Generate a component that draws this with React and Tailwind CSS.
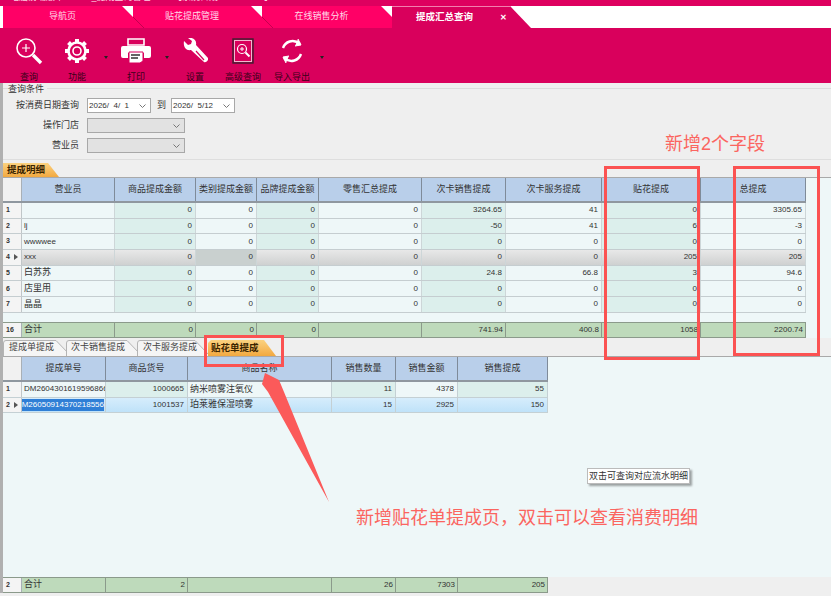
import React from "react";

const g1 = "grid w-fit grid-cols-[19px_93px_81px_61px_62px_103px_84px_96px_99px_105px]";
const g2 = "grid w-fit grid-cols-[19px_84px_82px_144px_64px_62px_90px]";

const detail = [
  ["1", "", "0", "0", "0", "0", "3264.65", "41", "0", "3305.65"],
  ["2", "lj", "0", "0", "0", "0", "-50", "41", "6", "-3"],
  ["3", "wwwwee", "0", "0", "0", "0", "0", "0", "0", "0"],
  ["4", "xxx", "0", "0", "0", "0", "0", "0", "205", "205"],
  ["5", "白苏苏", "0", "0", "0", "0", "24.8", "66.8", "3", "94.6"],
  ["6", "店里用", "0", "0", "0", "0", "0", "0", "0", "0"],
  ["7", "晶晶", "0", "0", "0", "0", "0", "0", "0", "0"],
];
const hd1 = ["营业员", "商品提成金额", "类别提成金额", "品牌提成金额", "零售汇总提成", "次卡销售提成", "次卡服务提成", "贴花提成", "总提成"];
const ft1 = ["合计", "0", "0", "0", "", "741.94", "400.8", "1058", "2200.74"];

const hd2 = ["提成单号", "商品货号", "商品名称", "销售数量", "销售金额", "销售提成"];
const rows2 = [
  ["1", "DM2604301619596866", "1000665", "纳米喷雾注氧仪", "11", "4378", "55"],
  ["2", "DM26050914370218556", "1001537", "珀莱雅保湿喷雾", "15", "2925", "150"],
];
const ft2 = ["合计", "2", "", "26", "7303", "205"];

function Head({ cols, labels }) {
  return (
    <div className={`${cols} h-[25px] bg-[#b9cfea] border-b-2 border-[#8f979f]`}>
      <div className="bg-[#f1f1f1] border-r border-[#a9b0b6]" />
      {labels.map((l, i) => (
        <div key={i} className="flex items-center justify-center border-r border-[#7f8b99] text-[9px] text-[#333]">{l}</div>
      ))}
    </div>
  );
}

function Row({ r, cols, current }) {
  return (
    <div className={`${cols} h-[15.7px] border-b border-[#c5cdd0] text-[8px] text-[#333]`}>
      <div className="flex items-center justify-between bg-[#f4f4f4] border-r border-[#c0c6c8] pl-[3px] pr-[3px] font-bold text-[7px]">
        <span>{r[0]}</span>
        {current && <span className="w-0 h-0 border-y-[3.5px] border-y-transparent border-l-[4px] border-l-[#555]" />}
      </div>
      {r.slice(1).map((c, i) => {
        const sized = i === 0 ? (/[a-z]/.test(c) ? "pl-[2px] text-[8px]" : "pl-[2px] text-[9px]") : "justify-end pr-[3px]";
        const bg = current
          ? i === 2 ? "bg-[#c9d0cf]" : "bg-gradient-to-b from-[#e8e8e8] to-[#cfd1d1]"
          : [1, 3, 5, 7].includes(i) ? "bg-[#dcefec]" : "bg-[#eef7f8]";
        return <div key={i} className={`flex items-center overflow-hidden whitespace-nowrap border-r border-[#cdd6d8] ${sized} ${bg}`}>{c}</div>;
      })}
    </div>
  );
}

function Row2({ r, selected }) {
  return (
    <div className={`${g2} h-[15.500px] border-b border-[#c4d0d4] text-[8px] text-[#333]`}>
      <div className="flex items-center justify-between bg-[#f4f4f4] border-r border-[#c0c6c8] pl-[3px] pr-[3px] font-bold text-[7px]">
        <span>{r[0]}</span>
        {selected && <span className="w-0 h-0 border-y-[3.5px] border-y-transparent border-l-[4px] border-l-[#555]" />}
      </div>
      {r.slice(1).map((c, j) => {
        const sized = j === 2 ? "text-[9px] pl-[2px]" : j === 0 ? (selected ? "justify-end pr-[1px]" : "pl-[2px]") : "justify-end pr-[3px]";
        const bg = selected ? "bg-gradient-to-b from-[#d6edfc] to-[#bfe2f9]" : j % 2 === 1 ? "bg-[#dcefec]" : "bg-[#eef7f8]";
        return (
          <div key={j} className={`flex items-center overflow-hidden whitespace-nowrap border-r border-[#c4d0d4] ${sized} ${bg}`}>
            {selected && j === 0 ? <span className="shrink-0 bg-[#2f7fd6] text-white">{c}</span> : c}
          </div>
        );
      })}
    </div>
  );
}

function Foot({ cols, r, n }) {
  return (
    <div className={`${cols} h-[16px] bg-[#bedabb] border-y border-[#8b9a8b] text-[8px] text-[#333]`}>
      <div className="flex items-center bg-[#f4f4f4] pl-[3px] font-bold text-[7px] border-r border-[#a9b0b6]">{n}</div>
      {r.map((c, i) => (
        <div key={i} className={`flex items-center border-r border-[#8b9a8b] ${i === 0 ? "pl-[2px] text-[9px]" : "justify-end pr-[2px]"}`}>{c}</div>
      ))}
    </div>
  );
}

function PageTab({ label, w, line }) {
  return (
    <div className={`relative ${w} h-[22px] bg-[#ff0066] flex items-center justify-center text-[9px] text-[#ffd9e8] [clip-path:polygon(0_0,calc(100%-11px)_0,100%_11px,100%_100%,0_100%)]`}>
      {line && (
        <svg className="absolute left-0 top-0" width="12" height="22" viewBox="0 0 12 22">
          <path d="M0 11 L11 22" stroke="#c4004f" strokeWidth="1" />
        </svg>
      )}
      <span className="pr-[11px]">{label}</span>
    </div>
  );
}

function Tool({ w, label, arrow, children }) {
  return (
    <div className={`relative flex flex-col items-center ${w}`}>
      <div className="h-[32px] mt-[7px] flex items-center justify-center">{children}</div>
      <div className="mt-[4px] text-[9px] text-[#3a0018] leading-[12px] whitespace-nowrap">{label}</div>
      {arrow && <span className={`absolute ${arrow} top-[28px] w-0 h-0 border-x-[2.5px] border-x-transparent border-t-[3px] border-t-[#222]`} />}
    </div>
  );
}

function Select({ w, value, off }) {
  return (
    <div className={`${w} h-[15px] flex items-center justify-between border border-[#a8a8a8] text-[8px] text-[#333] pl-[1px] pr-[4px] ${off ? "bg-[#e2e2e2]" : "bg-white"}`}>
      <span className="whitespace-pre">{value}</span>
      <svg width="7" height="4" viewBox="0 0 7 4"><path d="M0.500 0.500 L3.500 3.500 L6.500 0.500" fill="none" stroke="#777" strokeWidth="1" /></svg>
    </div>
  );
}

function SubTab({ label, w, width, pl }) {
  return (
    <div className={`relative ${w} h-[16px] flex items-center ${pl} text-[9px] text-[#444]`}>
      <svg className="absolute left-0 top-0" width={width + 6} height="16" viewBox={`0 0 ${width + 6} 16`}>
        <path d={`M0.500 16 V3 Q0.500 0.500 3 0.500 H${width - 10} L${width + 5} 16`} fill="#f5f5f5" stroke="#b4b4b4" />
      </svg>
      <span className="relative">{label}</span>
    </div>
  );
}

export default function App() {
  return (
    <div className="relative w-[831px] h-[596px] overflow-hidden bg-[#efefef] font-['Liberation_Sans','Noto_Sans_CJK_SC',sans-serif]">
      <div className="h-[6px] bg-[#de005f] overflow-hidden">
        <div className="pl-[10px] -mt-[9px] text-[9px] leading-[12px] text-[#ffd0e2] whitespace-pre">电脑前端版本6.0.0.0_提成查询管理12     【系统日期: 2026-5-14】</div>
      </div>
      <div className="flex h-[22px] pl-[3px] bg-white">
        <PageTab label="导航页" w="w-[130px]" />
        <PageTab label="贴花提成管理" w="w-[129px]" line />
        <PageTab label="在线销售分析" w="w-[130px]" line />
        <div className="w-[139px] h-[22px] bg-[#d9005c] border-t border-[#f27fae] flex items-center text-[9.500px] font-bold text-white pl-[24px] [clip-path:polygon(0_0,calc(100%-21px)_0,100%_100%,0_100%)]">
          <span>提成汇总查询</span>
          <span className="ml-[27px] text-[8px]">✕</span>
        </div>
      </div>
      <div className="flex h-[55px] bg-[#d9005c] pl-[3px]">
        <Tool w="w-[52px]" label="查询">
          <svg width="28" height="28" viewBox="0 0 28 28" fill="none" stroke="#fff"><circle cx="11" cy="11" r="9" strokeWidth="1.600" /><path d="M7 11h8M11 7v8" strokeWidth="1.200" /><path d="M18 18l8 8" strokeWidth="3.400" /></svg>
        </Tool>
        <Tool w="w-[44px]" label="功能" arrow="-right-[9px]">
          <svg width="26" height="26" viewBox="0 0 26 26" fill="none" stroke="#fff"><circle cx="13" cy="13" r="8.500" strokeWidth="2.600" /><circle cx="13" cy="13" r="4" strokeWidth="1.600" /><path d="M13 1v4M13 21v4M1 13h4M21 13h4M4.500 4.500l3 3M18.500 18.500l3 3M21.500 4.500l-3 3M7.500 18.500l-3 3" strokeWidth="4" /></svg>
        </Tool>
        <Tool w="w-[74px]" label="打印" arrow="right-[4px]">
          <svg width="30" height="26" viewBox="0 0 30 26"><path d="M7 1h16v6H7z" fill="none" stroke="#fff" strokeWidth="1.600" /><path d="M2 8h26a2 2 0 0 1 2 2v8a2 2 0 0 1-2 2h-5v-5H7v5H2a2 2 0 0 1-2-2v-8a2 2 0 0 1 2-2z" fill="#fff" /><path d="M8 14h14v9l-3 2H8z" fill="#fff" stroke="#d9005c" strokeWidth="1" /><path d="M10 17h9M10 20h7" stroke="#333" strokeWidth="1.400" /></svg>
        </Tool>
        <Tool w="w-[44px]" label="设置">
          <svg width="26" height="26" viewBox="0 0 26 26"><path d="M2 3l4 4 3-1 1-3-4-3c5-1 9 2 8 7l12 13c1 2-2 5-4 4L9 12c-5 1-8-3-7-9z" fill="#fff" /><path d="M14 13l8 9" stroke="#d9005c" strokeWidth="1.200" /></svg>
        </Tool>
        <Tool w="w-[52px]" label="高级查询">
          <svg width="22" height="26" viewBox="0 0 22 26" fill="none"><rect x="1" y="1" width="20" height="24" stroke="#3a2030" strokeWidth="1.400" /><rect x="2.500" y="2.500" width="17" height="21" stroke="#f4b5cf" strokeWidth="1" /><circle cx="10" cy="11" r="4.500" stroke="#fff" strokeWidth="1.200" /><path d="M8 11h4M10 9v4" stroke="#fff" strokeWidth="1" /><path d="M13.500 14.500l4 4" stroke="#fff" strokeWidth="2" /></svg>
        </Tool>
        <Tool w="w-[46px]" label="导入导出" arrow="-right-[9px]">
          <svg width="26" height="26" viewBox="0 0 26 26" fill="none" stroke="#fff" strokeWidth="2.400"><path d="M4 10C6 4 14 0 21 6" /><path d="M22 16C20 22 12 26 5 20" /><path d="M19 1l3 6-6 1" fill="#fff" strokeWidth="1" /><path d="M7 25l-3-6 6-1" fill="#fff" strokeWidth="1" /></svg>
        </Tool>
      </div>
      <div className="flex">
        <div className="w-[3px] bg-[#b0b0b0]" />
        <div className="flex-1 min-w-0">
          <div className="h-[6px] border-b border-[#dcdcdc]" />
          <div className="h-[71px] relative border-b border-[#dedede]">
            <div className="absolute left-[5px] -top-[5px] bg-[#efefef] pr-[3px] text-[9px] leading-[11px] text-[#333]">查询条件</div>
            <div className="flex flex-col gap-[5px] pt-[9px] text-[9px] text-[#333]">
              <div className="flex items-center h-[15px]"><span className="w-[76px] text-right">按消费日期查询</span><div className="ml-[8px]"><Select w="w-[64px]" value="2026/  4/  1" /></div><span className="ml-[6px] mr-[5px]">到</span><Select w="w-[64px]" value="2026/  5/12" /></div>
              <div className="flex items-center h-[15px]"><span className="w-[76px] text-right">操作门店</span><div className="ml-[8px]"><Select w="w-[98px]" off value="" /></div></div>
              <div className="flex items-center h-[15px]"><span className="w-[76px] text-right">营业员</span><div className="ml-[8px]"><Select w="w-[98px]" off value="" /></div></div>
            </div>
          </div>
          <div className="h-[17px] pt-[3px]">
            <div className="w-[56px] h-[14px] bg-gradient-to-b from-[#fbd27f] to-[#f2a93f] text-[9.500px] leading-[14px] font-bold text-[#3a2400] pl-[4px] [clip-path:polygon(0_0,calc(100%-11px)_0,100%_100%,0_100%)]">提成明细</div>
          </div>
          <div className="h-[161px] bg-[#eef7f8] border-t border-[#a9a9a9]">
            <Head cols={g1} labels={hd1} />
            {detail.map((r) => <Row key={r[0]} r={r} cols={g1} current={r[0] === "4"} />)}
            <div className="h-[9px]" />
            <Foot cols={g1} r={ft1} n="16" />
          </div>
          <div className="flex h-[19px] items-end border-b border-[#a9a9a9]">
            <SubTab label="提成单提成" w="w-[63px]" width={63} pl="pl-[6px]" />
            <SubTab label="次卡销售提成" w="w-[71px]" width={71} pl="pl-[5px]" />
            <SubTab label="次卡服务提成" w="w-[68px]" width={68} pl="pl-[6px]" />
            <div className="ml-[3px] w-[68px] h-[16px] flex items-center pl-[3px] text-[9.500px] font-bold text-[#3a2400] bg-gradient-to-b from-[#fbd27f] to-[#f2a93f] [clip-path:polygon(0_3px,3px_0,calc(100%-12px)_0,100%_100%,0_100%)]">贴花单提成</div>
          </div>
          <div className="h-[220px] bg-[#eef7f8]">
            <Head cols={g2} labels={hd2} />
            {rows2.map((r, i) => <Row2 key={r[0]} r={r} selected={i === 1} />)}
          </div>
          <Foot cols={g2} r={ft2} n="2" />
        </div>
      </div>

      {/* annotations */}
      <div className="absolute left-[665px] top-[131px] text-[18px] leading-[26px] text-[#fb6560] whitespace-nowrap">新增2个字段</div>
      <div className="absolute left-[604px] top-[166px] w-[96px] h-[194px] border-[3px] border-[#fb5252]" />
      <div className="absolute left-[733px] top-[166px] w-[87px] h-[190px] border-[3px] border-[#fb5252]" />
      <div className="absolute left-[204px] top-[335px] w-[80px] h-[32px] border-[3px] border-[#fb5252]" />
      <svg className="absolute left-[255px] top-[370px]" width="85" height="140" viewBox="0 0 85 140">
        <path d="M10 3 L24 10 L29 22 L74 132 L13 22 L7 14 Z" fill="#fb5a5a" />
      </svg>
      <div className="absolute left-[356px] top-[505px] text-[18px] leading-[26px] text-[#fb6560] whitespace-nowrap">新增贴花单提成页，双击可以查看消费明细</div>
      <div className="absolute left-[587px] top-[468px] h-[16px] px-[1px] bg-white border border-[#bbb] shadow-[2px_2px_2px_rgba(0,0,0,0.35)] text-[9px] leading-[14px] text-[#333] whitespace-nowrap">双击可查询对应流水明细</div>
    </div>
  );
}
